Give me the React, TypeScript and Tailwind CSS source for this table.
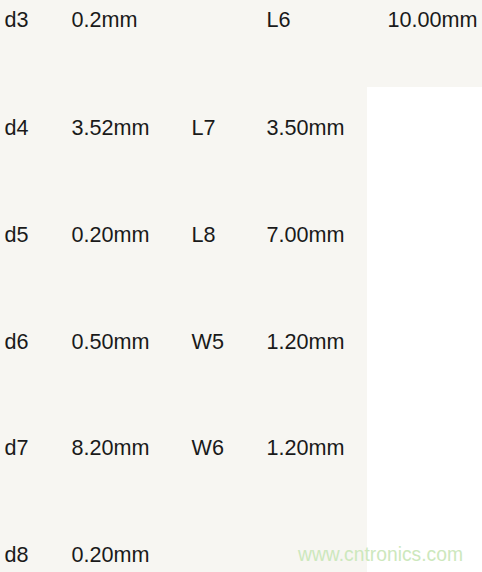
const rows = [
  ["d4", "3.52mm", "L7", "3.50mm"],
  ["d5", "0.20mm", "L8", "7.00mm"],
  ["d6", "0.50mm", "W5", "1.20mm"],
  ["d7", "8.20mm", "W6", "1.20mm"],
  ["d8", "0.20mm", "", ""],
];

export default function App() {
  return (
    <div
      className="relative h-[572px] w-[482px] overflow-hidden bg-white text-[21.6px] leading-[24px] text-[#1a1a1a]"
      style={{ fontFamily: '"Liberation Sans", Arial, sans-serif' }}
    >
      <div className="grid h-[87px] grid-cols-[67px_120px_75px_121px_1fr] bg-[#f7f6f2] pl-[4.5px] pt-[8px]">
        <div>d3</div>
        <div>0.2mm</div>
        <div></div>
        <div>L6</div>
        <div>10.00mm</div>
      </div>
      {rows.map((r, i) => (
        <div
          key={i}
          className="grid h-[106.75px] w-[367px] grid-cols-[67px_120px_75px_1fr] bg-[#f7f6f2] pl-[4.5px] pt-[29px]"
        >
          {r.map((c, j) => (
            <div key={j}>{c}</div>
          ))}
        </div>
      ))}
      <div className="absolute left-[298px] top-[543px] text-[19.3px] leading-[24px] text-[#cde8bd]">
        www.cntronics.com
      </div>
    </div>
  );
}
